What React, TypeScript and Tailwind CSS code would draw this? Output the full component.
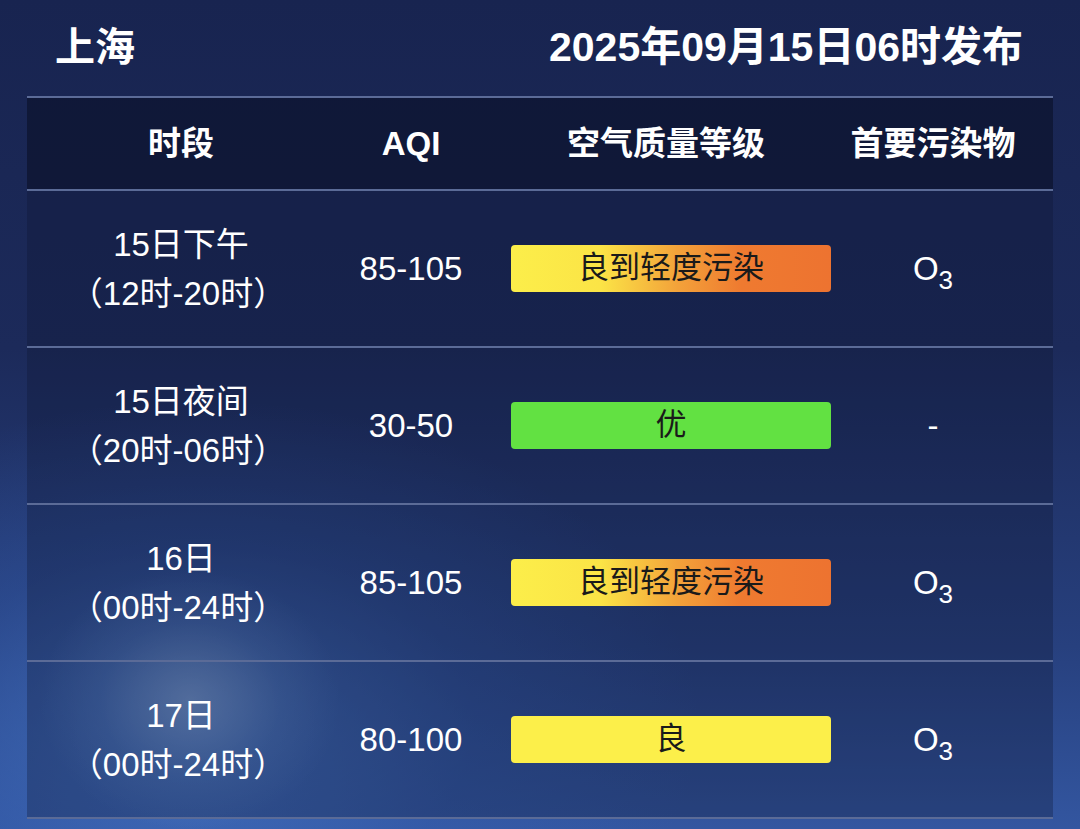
import React from 'react'

type Row = {
  day: string
  range: string
  aqi: string
  level: string
  kind: 'mixed' | 'good' | 'fine'
  pollutant: 'O3' | '-'
}

const rows: Row[] = [
  { day: '15日下午', range: '（12时-20时）', aqi: '85-105', level: '良到轻度污染', kind: 'mixed', pollutant: 'O3' },
  { day: '15日夜间', range: '（20时-06时）', aqi: '30-50', level: '优', kind: 'good', pollutant: '-' },
  { day: '16日', range: '（00时-24时）', aqi: '85-105', level: '良到轻度污染', kind: 'mixed', pollutant: 'O3' },
  { day: '17日', range: '（00时-24时）', aqi: '80-100', level: '良', kind: 'fine', pollutant: 'O3' },
]

const badgeClass = {
  mixed: 'bg-[linear-gradient(90deg,#fcee4a_0%,#fbe446_28%,#f3a23a_52%,#ef7a30_72%,#ed7330_100%)]',
  good: 'bg-[#62e142]',
  fine: 'bg-[#fcef4a]',
}

function Pollutant({ value }: { value: Row['pollutant'] }) {
  if (value === '-') return <span>-</span>
  return (
    <span>
      O<span className="relative top-[9px] text-[26px]">3</span>
    </span>
  )
}

export default function App() {
  return (
    <div className="relative w-[1080px] h-[829px] overflow-hidden font-['Liberation_Sans','Noto_Sans_CJK_SC',sans-serif] text-white bg-[linear-gradient(180deg,#182450_0%,#1c2a5a_42%,#27407e_78%,#3356a0_100%)]">
      {/* glow in lower left */}
      <div className="pointer-events-none absolute left-[-300px] top-[400px] w-[1000px] h-[650px] rounded-full bg-[radial-gradient(closest-side,rgba(75,125,205,0.65),rgba(55,100,185,0.3)_55%,rgba(40,80,160,0)_100%)]" />
      <div className="pointer-events-none absolute left-[40px] top-[570px] w-[300px] h-[260px] rounded-full bg-[radial-gradient(closest-side,rgba(160,190,230,0.5),rgba(115,155,215,0.2)_60%,rgba(90,130,200,0)_100%)]" />

      <div className="relative">
        {/* title */}
        <div className="flex items-center justify-between pl-[55px] pr-[57px] h-[96px] pb-[2px]">
          <div className="text-[40px] font-bold leading-none">上海</div>
          <div className="text-[41px] font-bold leading-none">2025年09月15日06时发布</div>
        </div>

        {/* table */}
        <div className="mx-[27px] border-t-2 border-[#5b6b97] bg-[rgba(12,20,48,0.3)]">
          <div className="grid grid-cols-[308px_152px_358px_176px] h-[93px] items-center border-b-2 border-[#5b6b97] bg-[rgba(10,16,40,0.5)] text-[33px] font-bold">
            <div className="text-center">时段</div>
            <div className="text-center">AQI</div>
            <div className="text-center">空气质量等级</div>
            <div className="text-center">首要污染物</div>
          </div>
          {rows.map((r, i) => (
            <div
              key={i}
              className="grid grid-cols-[308px_152px_358px_176px] h-[157px] items-center border-b-2 border-[#5b6b97] text-[33px]"
            >
              <div className="text-center leading-[49px]">
                <div>{r.day}</div>
                <div className="-ml-[6px]">{r.range}</div>
              </div>
              <div className="text-center">{r.aqi}</div>
              <div className="flex justify-center pl-[10px]">
                <div className={`w-[320px] h-[47px] rounded-[4px] flex items-center justify-center text-[31px] text-[#1a1a1a] ${badgeClass[r.kind]}`}>
                  {r.level}
                </div>
              </div>
              <div className="text-center">
                <Pollutant value={r.pollutant} />
              </div>
            </div>
          ))}
        </div>
      </div>
    </div>
  )
}
